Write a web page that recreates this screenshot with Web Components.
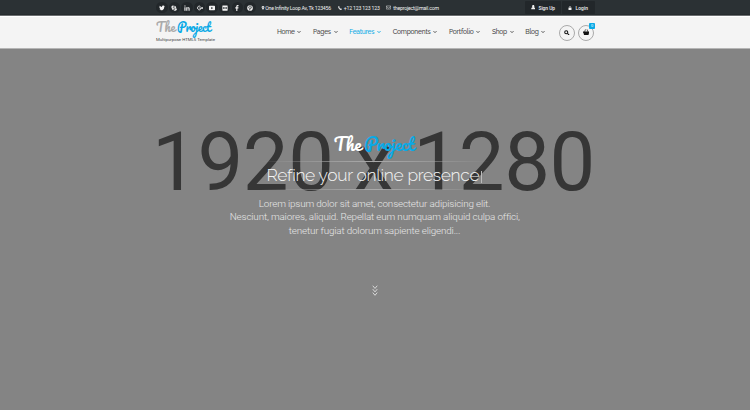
<!DOCTYPE html>
<html lang="en"><head><meta charset="utf-8"><title>The Project</title>
<style>html,body{margin:0;height:100%;overflow:hidden}body{font-family:Roboto,"Open Sans",sans-serif;background:#848484}</style></head>
<body><project-page></project-page>
<script>
// Text run whose tracking is adjusted to fill the width given in "w".
class FitText extends HTMLElement{
  connectedCallback(){
    this.attachShadow({mode:'open'}).innerHTML='<style>:host{display:block;flex:none;white-space:nowrap}span{display:inline-block;white-space:nowrap}</style><span><slot></slot></span>';
    const w=+this.getAttribute('w'),s=this.shadowRoot.querySelector('span');
    this.style.width=w+'px';
    s.style.letterSpacing=(w-s.getBoundingClientRect().width)/this.textContent.length+'px';
  }
}
customElements.define('fit-text',FitText);

const icons={
 twitter:'<path d="M1 12c2 0 3 0 4-1-2 0-3-1-3-2h1C2 8 1 7 1 5l1 .5C1 4 1 3 1.700 2c2 2 4 3 6.300 3 0-2 1-3.500 3-3.500 1 0 2 .5 2.500 1L15 2l-1 2 1.500-.5L14 5c0 6-4 9-8 9-2 0-4-.7-5-2z"/>',
 skype:'<circle cx="5" cy="5" r="4"/><circle cx="11" cy="11" r="4"/><circle cx="8" cy="8" r="6"/><path d="M11 5.500C9 4 5.500 4 5.500 6s5.500 1.500 5.500 4-4 2.500-6 .5" fill="none" stroke="#1d2224" stroke-width="1.700"/>',
 linkedin:'<path d="M1 6h3v9H1zM1 1h3v3H1zM6 6h3v1.500C10 5 15 5 15 9v6h-3v-5c0-3-3-3-3 0v5H6z"/>',
 google:'<path d="M10 8H6M9 4C5 1 1.500 4 1.500 8S6 14.500 9 12c1-1 1-2 1-4M11 8h5M13.500 5.500v5" fill="none" stroke="currentColor" stroke-width="2.400"/>',
 youtube:'<path fill-rule="evenodd" d="M2 2h12q2 0 2 2v8q0 2-2 2H2q-2 0-2-2V4q0-2 2-2zM6 5v6l5-3z"/>',
 flickr:'<path fill-rule="evenodd" d="M2 1h12q1 0 1 1v12q0 1-1 1H2q-1 0-1-1V2q0-1 1-1zM3 6v4h4V6zm6 0v4h4V6z"/>',
 facebook:'<path d="M6 16V9H3.500V6H6V4c0-3 2-4 6-4v3c-2 0-3 0-3 1.500V6h3l-.5 3H9v7z"/>',
 pinterest:'<circle cx="8" cy="8" r="7.500"/><path d="M5 9C3 5 6 3 8.500 3 12 3 13 6 11 9c-1 1.500-3 1-3 0M8.500 6 6.500 14" fill="none" stroke="#1d2224" stroke-width="1.700"/>',
 pin:'<path fill-rule="evenodd" d="M8 0c6 0 6 5 5 7l-5 9-5-9C2 5 2 0 8 0zm0 3a2 2 0 1 0 0 4 2 2 0 0 0 0-4z"/>',
 phone:'<path d="M1 2 4 0l3 5-2 2c1 2 2 3 4 4l2-2 5 3-2 3C9 18-1 8 1 2z"/>',
 mail:'<path d="M1 3h14v10H1zM1 5l7 5 7-5" fill="none" stroke="currentColor" stroke-width="1.500"/>',
 user:'<path d="M8 0c5 0 5 7 2 8 4 1 5 2 5 7H1c0-5 1-6 5-7C3 7 3 0 8 0z"/>',
 lock:'<path d="M2 7h12v9H2z"/><path d="M5 8V4c0-4 6-4 6 0v4" fill="none" stroke="currentColor" stroke-width="2"/>',
 chevron:'<path d="m2 4.500 6 6 6-6" fill="none" stroke="currentColor" stroke-width="3.700"/>',
 search:'<circle cx="6.500" cy="6.500" r="4.500" fill="none" stroke="currentColor" stroke-width="3"/><path d="m10 10 5 5" stroke="currentColor" stroke-width="3"/>',
 basket:'<path d="M0 6h16v3h-1l-1.500 6h-11L1 9H0z"/><path d="m4 7 2-6M12 7l-2-6" stroke="currentColor" stroke-width="1.700"/>',
 down:'<path d="m2 1 6 4 6-4M2 6l6 4 6-4M2 11l6 4 6-4" fill="none" stroke="currentColor" stroke-width="1.400"/>'
};
class UiIcon extends HTMLElement{
  connectedCallback(){
    const s=this.getAttribute('size')||6;
    this.attachShadow({mode:'open'}).innerHTML=`<style>:host{display:block;flex:none;width:${s}px;height:${s}px}svg{display:block;width:100%;height:100%;fill:currentColor}</style><svg viewBox="0 0 16 16" preserveAspectRatio="none">${icons[this.getAttribute('name')]}</svg>`;
  }
}
customElements.define('ui-icon',UiIcon);

class TopBar extends HTMLElement{
  connectedCallback(){
    const social=['twitter','skype','linkedin','google','youtube','flickr','facebook','pinterest'];
    this.attachShadow({mode:'open'}).innerHTML=`<style>
    :host{display:flex;box-sizing:border-box;height:16px;padding:0 155px 0 156px;align-items:center;background:linear-gradient(#2b3134 0 14px,#202527 15px);border-bottom:1px solid #6b6e70;color:#f2f2f2;font-size:5.200px;line-height:8px}
    .s{width:11.500px;height:11.500px;margin-right:1.100px;border-radius:50%;background:#22272a;display:grid;place-items:center}
    .c{display:flex;align-items:center}
    .b{display:flex;align-items:center;height:13px;box-sizing:border-box;background:#22272a;margin-left:1px;border-radius:1px;gap:3.500px;font-weight:500;font-size:4.900px}
    </style>${social.map(n=>`<div class="s"><ui-icon name="${n}" size="6"></ui-icon></div>`).join('')}
    <div class="c" style="margin-left:4px;gap:.5px"><ui-icon name="pin" size="4"></ui-icon><fit-text w="65.500">One Infinity Loop Av, Tk 123456</fit-text></div>
    <div class="c" style="margin-left:7px;gap:2px"><ui-icon name="phone" size="4"></ui-icon><fit-text w="36">+12 123 123 123</fit-text></div>
    <div class="c" style="margin-left:6.500px;gap:2px"><ui-icon name="mail" size="5"></ui-icon><fit-text w="45.500">theproject@mail.com</fit-text></div>
    <div class="b" style="margin-left:auto;width:36px;padding-left:5.500px"><ui-icon name="user" size="4.500"></ui-icon><fit-text w="16.500">Sign Up</fit-text></div>
    <div class="b" style="width:33px;padding-left:6px"><ui-icon name="lock" size="4"></ui-icon><fit-text w="12.500">Login</fit-text></div>`;
  }
}
customElements.define('top-bar',TopBar);

class BrandName extends HTMLElement{
  connectedCallback(){
    this.attachShadow({mode:'open'}).innerHTML=`<style>:host{display:flex;font-family:Pacifico,"Liberation Serif",serif;color:var(--first)}.p{color:#09a9e6}</style>
    <fit-text w="${this.getAttribute('a')}">The</fit-text><fit-text class="p" style="margin-left:${this.getAttribute('gap')}px" w="${this.getAttribute('b')}">Project</fit-text>`;
  }
}
customElements.define('brand-name',BrandName);

class SiteHeader extends HTMLElement{
  connectedCallback(){
    const nav=[['Home',17.500],['Pages',18],['Features',25],['Components',38],['Portfolio',24.500],['Shop',15],['Blog',13.500]];
    this.attachShadow({mode:'open'}).innerHTML=`<style>
    :host{display:flex;box-sizing:border-box;height:33px;padding:0 156px 0 156px;background:#f4f4f4;border-top:1px solid #fff;border-bottom:1px solid #b5b5b5;color:#484848}
    .logo{width:121px;padding-top:2px}
    brand-name{font-size:11.800px;line-height:17px;--first:#aaa}
    .sub{font-size:4.300px;line-height:6px;margin-top:1px;color:#444}
    nav{display:flex;align-items:center;font-family:Raleway,Roboto,sans-serif;font-weight:500;font-size:6.600px;line-height:10px;padding-bottom:1px}
    .i{display:flex;align-items:center;gap:2.700px;margin-right:11.700px}.i:last-child{margin-right:0}.on{color:#09a9e6}
    .r{margin-left:auto;display:flex;gap:3.200px;align-items:center}
    .o{box-sizing:border-box;width:16px;height:16px;border:1px solid #aaa;border-radius:50%;display:grid;place-items:center;color:#111;position:relative}
    .n{position:absolute;right:-2px;top:-3px;width:6px;height:6px;background:#09a9e6;color:#fff;font-size:4px;line-height:6px;text-align:center;border-radius:1px}
    </style><div class="logo"><brand-name a="19.500" gap="1.500" b="33.500"></brand-name><fit-text class="sub" w="59">Multipurpose HTML5 Template</fit-text></div>
    <nav>${nav.map(([t,w],i)=>`<div class="i ${i==2?'on':''}"><fit-text w="${w}">${t}</fit-text><ui-icon name="chevron" size="4"></ui-icon></div>`).join('')}</nav>
    <div class="r"><div class="o"><ui-icon name="search" size="5.500"></ui-icon></div><div class="o"><ui-icon name="basket" size="6.500"></ui-icon><span class="n">0</span></div></div>`;
  }
}
customElements.define('site-header',SiteHeader);

class HeroBanner extends HTMLElement{
  connectedCallback(){
    this.attachShadow({mode:'open'}).innerHTML=`<style>
    :host{display:grid;height:361px;background:#848484;color:#f4f4f4;overflow:hidden}
    .big,.copy{grid-area:1/1}
    .big{font-size:81.500px;line-height:96px;color:#363636;padding:65px 3px 0 0;justify-self:center}
    .copy{z-index:1;display:flex;flex-direction:column;align-items:center;padding-top:83px}
    brand-name{font-size:17px;line-height:24px;--first:#fff;padding-right:2px}
    .line{height:1px;width:230px;background:linear-gradient(90deg,transparent,#aaa 50%,transparent)}
    .h{font-family:Raleway,Lato,sans-serif;font-weight:300;font-size:17.400px;line-height:27px;display:flex;align-items:center;gap:2px;padding-right:2px}
    .cur{width:1px;height:12px;background:#bbb;margin-top:3px}
    .p{font-weight:300;font-size:9.900px;line-height:13.700px;color:#e6e6e6;display:flex;flex-direction:column;align-items:center;margin-top:6.500px;padding-right:1px}
    </style><fit-text class="big" w="443">1920 x 1280</fit-text>
    <div class="copy"><brand-name a="28" gap="2.500" b="50"></brand-name>
    <div class="line" style="margin-top:5px"></div><div class="h"><fit-text w="212">Refine your online presence</fit-text><span class="cur"></span></div><div class="line"></div>
    <div class="p"><fit-text w="231.500">Lorem ipsum dolor sit amet, consectetur adipisicing elit.</fit-text><fit-text w="289.500">Nesciunt, maiores, aliquid. Repellat eum numquam aliquid culpa offici,</fit-text><fit-text w="171.500">tenetur fugiat dolorum sapiente eligendi...</fit-text></div>
    <ui-icon name="down" size="6" style="width:6px;height:11px;margin-top:47px"></ui-icon></div>`;
  }
}
customElements.define('hero-banner',HeroBanner);

class ProjectPage extends HTMLElement{
  connectedCallback(){
    this.attachShadow({mode:'open'}).innerHTML='<style>:host{display:block}</style><top-bar></top-bar><site-header></site-header><hero-banner></hero-banner>';
  }
}
customElements.define('project-page',ProjectPage);
</script></body></html>
